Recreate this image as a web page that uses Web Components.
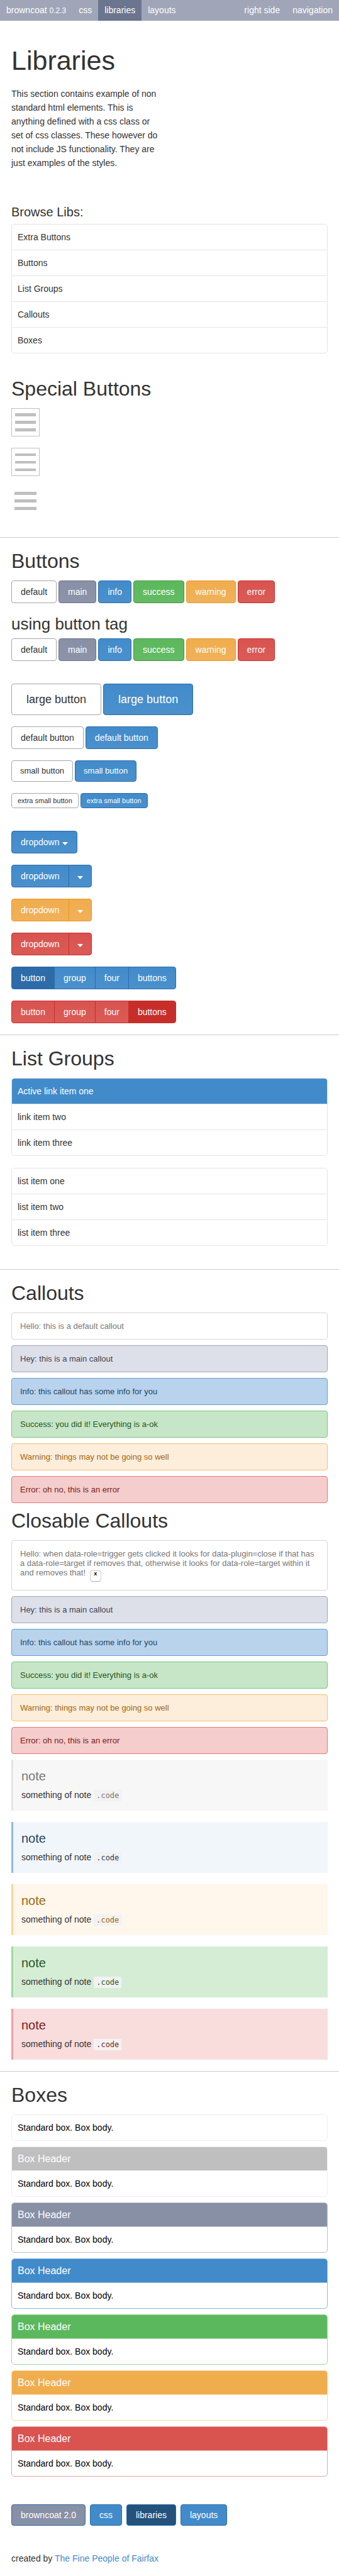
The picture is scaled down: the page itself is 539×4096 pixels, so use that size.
<!DOCTYPE html>
<html lang="en">
<head>
<meta charset="utf-8">
<meta name="viewport" content="width=device-width, initial-scale=1">
<title>Libraries - browncoat</title>
<style>
  body {
    margin: 0;
    background: #fff;
    color: #333;
    font-family: "Liberation Sans", Arial, sans-serif;
    font-size: 14px;
    line-height: 22px;
  }
  small { font-size: 12px; }
</style>
</head>
<body>

<bc-navbar>
  <a slot="brand" href="#home">browncoat <small>0.2.3</small></a>
  <a href="#css">css</a>
  <a href="#libraries" class="active" aria-current="page">libraries</a>
  <a href="#layouts">layouts</a>
  <a slot="right" href="#right">right side</a>
  <a slot="right" href="#navigation">navigation</a>
</bc-navbar>

<main>
  <bc-section class="intro">
    <h1>Libraries</h1>
    <p>This section contains example of non standard html elements. This is anything defined with a css class or set of css classes. These however do not include JS functionality. They are just examples of the styles.</p>
    <h4>Browse Libs:</h4>
    <bc-list>
      <a href="#special">Extra Buttons</a>
      <a href="#buttons">Buttons</a>
      <a href="#lists">List Groups</a>
      <a href="#callouts">Callouts</a>
      <a href="#boxes">Boxes</a>
    </bc-list>
  </bc-section>

  <bc-section id="special" spaced>
    <h2>Special Buttons</h2>
    <bc-stack size="m">
      <bc-menu-button></bc-menu-button>
      <bc-menu-button kind="thin"></bc-menu-button>
      <bc-menu-button kind="bare"></bc-menu-button>
    </bc-stack>
  </bc-section>

  <bc-section id="buttons" ruled>
    <h2>Buttons</h2>
    <bc-row>
      <bc-button href="#b">default</bc-button>
      <bc-button href="#b" kind="main">main</bc-button>
      <bc-button href="#b" kind="info">info</bc-button>
      <bc-button href="#b" kind="success">success</bc-button>
      <bc-button href="#b" kind="warning">warning</bc-button>
      <bc-button href="#b" kind="error">error</bc-button>
    </bc-row>
    <h3>using button tag</h3>
    <bc-stack size="l">
      <bc-row>
        <bc-button>default</bc-button>
        <bc-button kind="main">main</bc-button>
        <bc-button kind="info">info</bc-button>
        <bc-button kind="success">success</bc-button>
        <bc-button kind="warning">warning</bc-button>
        <bc-button kind="error">error</bc-button>
      </bc-row>
      <bc-stack size="m">
        <bc-row>
          <bc-button size="large">large button</bc-button>
          <bc-button size="large" kind="info">large button</bc-button>
        </bc-row>
        <bc-row>
          <bc-button>default button</bc-button>
          <bc-button kind="info">default button</bc-button>
        </bc-row>
        <bc-row>
          <bc-button size="small">small button</bc-button>
          <bc-button size="small" kind="info">small button</bc-button>
        </bc-row>
        <bc-row>
          <bc-button size="xsmall">extra small button</bc-button>
          <bc-button size="xsmall" kind="info">extra small button</bc-button>
        </bc-row>
      </bc-stack>
      <bc-stack size="m">
        <bc-row><bc-button kind="info" caret>dropdown</bc-button></bc-row>
        <bc-group>
          <bc-button kind="info">dropdown</bc-button>
          <bc-button kind="info" caret label="open menu"></bc-button>
        </bc-group>
        <bc-group>
          <bc-button kind="warning">dropdown</bc-button>
          <bc-button kind="warning" caret label="open menu"></bc-button>
        </bc-group>
        <bc-group>
          <bc-button kind="error">dropdown</bc-button>
          <bc-button kind="error" caret label="open menu"></bc-button>
        </bc-group>
        <bc-group>
          <bc-button kind="info" active>button</bc-button>
          <bc-button kind="info">group</bc-button>
          <bc-button kind="info">four</bc-button>
          <bc-button kind="info">buttons</bc-button>
        </bc-group>
        <bc-group>
          <bc-button kind="error">button</bc-button>
          <bc-button kind="error">group</bc-button>
          <bc-button kind="error">four</bc-button>
          <bc-button kind="error" active>buttons</bc-button>
        </bc-group>
      </bc-stack>
    </bc-stack>
  </bc-section>

  <bc-section id="lists" ruled spaced>
    <h2>List Groups</h2>
    <bc-list>
      <a href="#one" class="active">Active link item one</a>
      <a href="#two">link item two</a>
      <a href="#three">link item three</a>
    </bc-list>
    <bc-list>
      <span>list item one</span>
      <span>list item two</span>
      <span>list item three</span>
    </bc-list>
  </bc-section>

  <bc-section id="callouts" ruled>
    <h2>Callouts</h2>
    <bc-stack size="s">
      <bc-callout>Hello: this is a default callout</bc-callout>
      <bc-callout kind="main">Hey: this is a main callout</bc-callout>
      <bc-callout kind="info">Info: this callout has some info for you</bc-callout>
      <bc-callout kind="success">Success: you did it! Everything is a-ok</bc-callout>
      <bc-callout kind="warning">Warning: things may not be going so well</bc-callout>
      <bc-callout kind="error">Error: oh no, this is an error</bc-callout>
    </bc-stack>
    <h2 class="next">Closable Callouts</h2>
    <bc-stack size="s">
      <bc-callout closable>Hello: when data-role=trigger gets clicked it looks for data-plugin=close if that has a data-role=target if removes that, otherwise it looks for data-role=target within it and removes that!</bc-callout>
      <bc-callout kind="main">Hey: this is a main callout</bc-callout>
      <bc-callout kind="info">Info: this callout has some info for you</bc-callout>
      <bc-callout kind="success">Success: you did it! Everything is a-ok</bc-callout>
      <bc-callout kind="warning">Warning: things may not be going so well</bc-callout>
      <bc-callout kind="error">Error: oh no, this is an error</bc-callout>
      <bc-stack size="m">
        <bc-note heading="note" code=".code">something of note</bc-note>
        <bc-note heading="note" code=".code" kind="info">something of note</bc-note>
        <bc-note heading="note" code=".code" kind="warning">something of note</bc-note>
        <bc-note heading="note" code=".code" kind="success">something of note</bc-note>
        <bc-note heading="note" code=".code" kind="error">something of note</bc-note>
      </bc-stack>
    </bc-stack>
  </bc-section>

  <bc-section id="boxes" ruled class="last">
    <h2>Boxes</h2>
    <bc-stack size="s">
      <bc-box>Standard box. Box body.</bc-box>
      <bc-box heading="Box Header">Standard box. Box body.</bc-box>
      <bc-box heading="Box Header" kind="main">Standard box. Box body.</bc-box>
      <bc-box heading="Box Header" kind="info">Standard box. Box body.</bc-box>
      <bc-box heading="Box Header" kind="success">Standard box. Box body.</bc-box>
      <bc-box heading="Box Header" kind="warning">Standard box. Box body.</bc-box>
      <bc-box heading="Box Header" kind="error">Standard box. Box body.</bc-box>
    </bc-stack>
  </bc-section>
</main>

<bc-footer>
  <a slot="nav" href="#home" class="brand">browncoat 2.0</a>
  <a slot="nav" href="#css">css</a>
  <a slot="nav" href="#libraries" class="active">libraries</a>
  <a slot="nav" href="#layouts">layouts</a>
  created by <a href="#fairfax" class="credit">The Fine People of Fairfax</a>
</bc-footer>

<script>
const define = (name, html, setup) => {
  const template = document.createElement('template');
  template.innerHTML = html;
  customElements.define(name, class extends HTMLElement {
    connectedCallback() {
      if (this.shadowRoot) return;
      const root = this.attachShadow({ mode: 'open' });
      root.append(template.content.cloneNode(true));
      if (setup) setup(this, root);
    }
  });
};

define('bc-navbar', `
  <style>
    :host { display: block; background: #a0a6b8; color: #fff; }
    nav { display: flex; justify-content: space-between; }
    div { display: flex; }
    ::slotted(a) { padding: 5px 10px; color: inherit; text-decoration: none; white-space: nowrap; }
    ::slotted(a.active) { background: #6b758e; }
  </style>
  <nav>
    <div><slot name="brand"></slot><slot></slot></div>
    <div><slot name="right"></slot></div>
  </nav>`);

define('bc-section', `
  <style>
    :host { display: block; padding: 0 18px 18px; }
    :host(.intro) { padding: 39px 18px 19px; }
    :host(.last) { padding-bottom: 44px; }
    :host([spaced]) { padding-bottom: 36px; }
    :host([ruled][spaced]) { padding-bottom: 18px; }
    :host([ruled]) { border-top: 1px solid #ccc; padding-top: 19px; }
    ::slotted(h1) { margin: 0 0 18px; font-size: 43px; line-height: 48px; font-weight: normal; }
    ::slotted(h2) { margin: 0 0 13px; font-size: 32px; line-height: 36px; font-weight: normal; }
    ::slotted(h2.next) { margin-top: 10px; }
    ::slotted(h3) { margin: 18px 0 8px; font-size: 26px; line-height: 30px; font-weight: normal; }
    ::slotted(h4) { margin: 0 0 7px; font-size: 20px; line-height: 24px; font-weight: normal; }
    ::slotted(p) { margin: 0 0 55px; width: 48%; }
    ::slotted(bc-list) { margin-bottom: 19px; }
  </style>
  <slot></slot>`);

define('bc-stack', `
  <style>
    :host { display: flex; flex-direction: column; gap: 9px; }
    :host([size="m"]) { gap: 18px; }
    :host([size="l"]) { gap: 36px; }
  </style>
  <slot></slot>`);

define('bc-row', `
  <style>:host { display: flex; flex-wrap: wrap; gap: 3px; }</style>
  <slot></slot>`);

define('bc-group', `
  <style>
    :host { display: flex; }
    ::slotted(*) { --radius: 0; }
    ::slotted(:first-child) { --radius: 4px 0 0 4px; }
    ::slotted(:last-child) { --radius: 0 4px 4px 0; }
    ::slotted(:not(:first-child)) { margin-left: -1px; }
  </style>
  <slot></slot>`);

define('bc-list', `
  <style>
    :host { display: flex; flex-direction: column; border: 1px solid #e5e5e5; border-radius: 5px; overflow: hidden; }
    ::slotted(*) { padding: 9px; color: inherit; text-decoration: none; }
    ::slotted(:not(:last-child)) { border-bottom: 1px solid #e5e5e5; }
    ::slotted(.active) { background: #428bca; color: #fff; }
  </style>
  <slot></slot>`);

define('bc-menu-button', `
  <style>
    :host { display: flex; }
    button {
      display: flex; flex-direction: column; gap: 7px;
      margin: 0; padding: 7px 5px; width: 45px; box-sizing: border-box;
      background: #fff; border: 1px solid #bfbfbf; border-radius: 0;
    }
    i { height: 5px; align-self: stretch; background: #bfbfbf; }
    :host([kind="thin"]) button { gap: 8px; padding: 8px 5px 7px; }
    :host([kind="thin"]) i { height: 4px; }
    :host([kind="bare"]) button { border: 0; }
  </style>
  <button type="button" aria-label="menu"><i></i><i></i><i></i></button>`);

const caret = '<svg width="9" height="10" viewBox="0 0 9 10" aria-hidden="true"><path d="M0 5h9L4.5 10z" fill="currentColor"/></svg>';

define('bc-button', `
  <style>
    :host { display: block; --top: #fff; --bottom: #fff; --edge: #a6a6a6; --ink: #333; }
    :host([kind="main"]) { --top: #8890a5; --bottom: #8d94a9; --edge: #6b758e; --ink: #fff; }
    :host([kind="info"]) { --top: #428bca; --bottom: #4a90cd; --edge: #2d6ca8; --ink: #fff; }
    :host([kind="success"]) { --top: #5cb85c; --bottom: #64bb64; --edge: #419641; --ink: #fff; }
    :host([kind="warning"]) { --top: #f0ad4e; --bottom: #f1b159; --edge: #eb9521; --ink: #fff; }
    :host([kind="error"]) { --top: #d9534f; --bottom: #db5b57; --edge: #c72e2a; --ink: #fff; }
    :host([active]) { --top: var(--edge); --bottom: var(--edge); }
    .b {
      display: flex; align-items: center; justify-content: center; gap: 4px;
      box-sizing: border-box; height: 36px; margin: 0; padding: 0 14px;
      border: 1px solid var(--edge); border-radius: var(--radius, 4px);
      background: linear-gradient(var(--top), var(--bottom));
      color: var(--ink); font: inherit; text-decoration: none; white-space: nowrap;
    }
    :host([label]) .b { padding: 0 13px; }
    :host([size="large"]) .b { height: 50px; padding: 0 23px; font-size: 18px; }
    :host([size="small"]) .b { height: 34px; padding: 0 13px; font-size: 13px; }
    :host([size="xsmall"]) .b { height: 24px; padding: 0 9px; font-size: 11px; }
  </style>`, (host, root) => {
    const href = host.getAttribute('href');
    const b = document.createElement(href ? 'a' : 'button');
    b.className = 'b';
    if (href) b.href = href; else b.type = 'button';
    const label = host.getAttribute('label');
    if (label) b.setAttribute('aria-label', label);
    b.innerHTML = (label ? '' : '<span><slot></slot></span>') + (host.hasAttribute('caret') ? caret : '');
    root.append(b);
  });

define('bc-callout', `
  <style>
    :host {
      display: block; padding: 13px; border: 1px solid var(--edge); border-radius: 4px;
      background: var(--fill); color: var(--ink); font-size: 13px; line-height: 15px;
      --fill: #fff; --edge: #d5d5d5; --ink: #777;
    }
    :host([kind="main"]) { --fill: #dde0e8; --edge: #a0a6b8; --ink: #3e4457; }
    :host([kind="info"]) { --fill: #b9d3ec; --edge: #639fd6; --ink: #1d4567; }
    :host([kind="success"]) { --fill: #c7e6c7; --edge: #78c578; --ink: #255625; }
    :host([kind="warning"]) { --fill: #fdeddb; --edge: #f4bf73; --ink: #a0660d; }
    :host([kind="error"]) { --fill: #f4cdcc; --edge: #e27c79; --ink: #7a1c1a; }
    button {
      box-sizing: border-box; width: 18px; height: 18px; margin: 0 0 0 3px; padding: 0 0 7px;
      border: 1px solid #ccc; border-bottom-color: #aaa; border-radius: 4px;
      background: #fff; color: #000; font: bold 9px/9px "Liberation Sans", Arial, sans-serif;
    }
  </style>
  <slot></slot>`, (host, root) => {
    if (!host.hasAttribute('closable')) return;
    const b = document.createElement('button');
    b.type = 'button';
    b.textContent = 'x';
    b.addEventListener('click', () => host.remove());
    root.append(' ', b);
  });

define('bc-note', `
  <style>
    :host {
      display: block; padding: 14px 13px; border-left: 3px solid var(--edge); background: var(--fill);
      --fill: #f7f7f7; --edge: #e5e5e5; --ink: #777;
    }
    :host([kind="info"]) { --fill: #f1f6fb; --edge: #8ebae0; --ink: #1d4567; }
    :host([kind="warning"]) { --fill: #fff6ec; --edge: #f8d5a0; --ink: #a0660d; }
    :host([kind="success"]) { --fill: #d5edd5; --edge: #a0d8a0; --ink: #255625; }
    :host([kind="error"]) { --fill: #f9dddd; --edge: #eda3a1; --ink: #7a1c1a; }
    h4 { margin: 0 0 7px; color: var(--ink); font-size: 20px; line-height: 24px; font-weight: normal; }
    p { margin: 0; }
    code {
      padding: 2px 4px; background: #f2f2f2; color: var(--ink);
      font: 12px/14px "DejaVu Sans Mono", monospace;
    }
  </style>
  <h4></h4>
  <p><slot></slot> <code></code></p>`, (host, root) => {
    root.querySelector('h4').textContent = host.getAttribute('heading');
    root.querySelector('code').textContent = host.getAttribute('code');
  });

define('bc-box', `
  <style>
    :host {
      display: block; border: 1px solid var(--edge); border-radius: 5px; overflow: hidden; color: #000;
      --fill: #bfbfbf; --edge: #f0f0f0;
    }
    :host([kind="main"]) { --fill: #8890a5; --edge: #bcc0cc; }
    :host([kind="info"]) { --fill: #428bca; --edge: #8ebae0; }
    :host([kind="success"]) { --fill: #5cb85c; --edge: #a0d8a0; }
    :host([kind="warning"]) { --fill: #f0ad4e; --edge: #f8d5a0; }
    :host([kind="error"]) { --fill: #d9534f; --edge: #eda3a1; }
    header { padding: 8px 9px 7px; border-bottom: 1px solid var(--edge); background: var(--fill); color: #fff; font-size: 16px; }
    div { padding: 9px; }
  </style>
  <div><slot></slot></div>`, (host, root) => {
    const heading = host.getAttribute('heading');
    if (!heading) return;
    const header = document.createElement('header');
    header.textContent = heading;
    root.querySelector('div').before(header);
  });

define('bc-footer', `
  <style>
    :host { display: block; padding: 0 18px 19px; }
    nav { display: flex; flex-wrap: wrap; gap: 7px; margin-bottom: 41px; }
    ::slotted(a[slot="nav"]) {
      padding: 5px 14px; border: 1px solid #2d6ca8; border-radius: 4px;
      background: #428bca; color: #fff; text-decoration: none;
    }
    ::slotted(a.brand) { background: #8890a5; }
    ::slotted(a.active) { background: #23527c; }
    ::slotted(a.credit) { color: #428bca; text-decoration: none; }
  </style>
  <nav><slot name="nav"></slot></nav>
  <slot></slot>`);
</script>
</body>
</html>
